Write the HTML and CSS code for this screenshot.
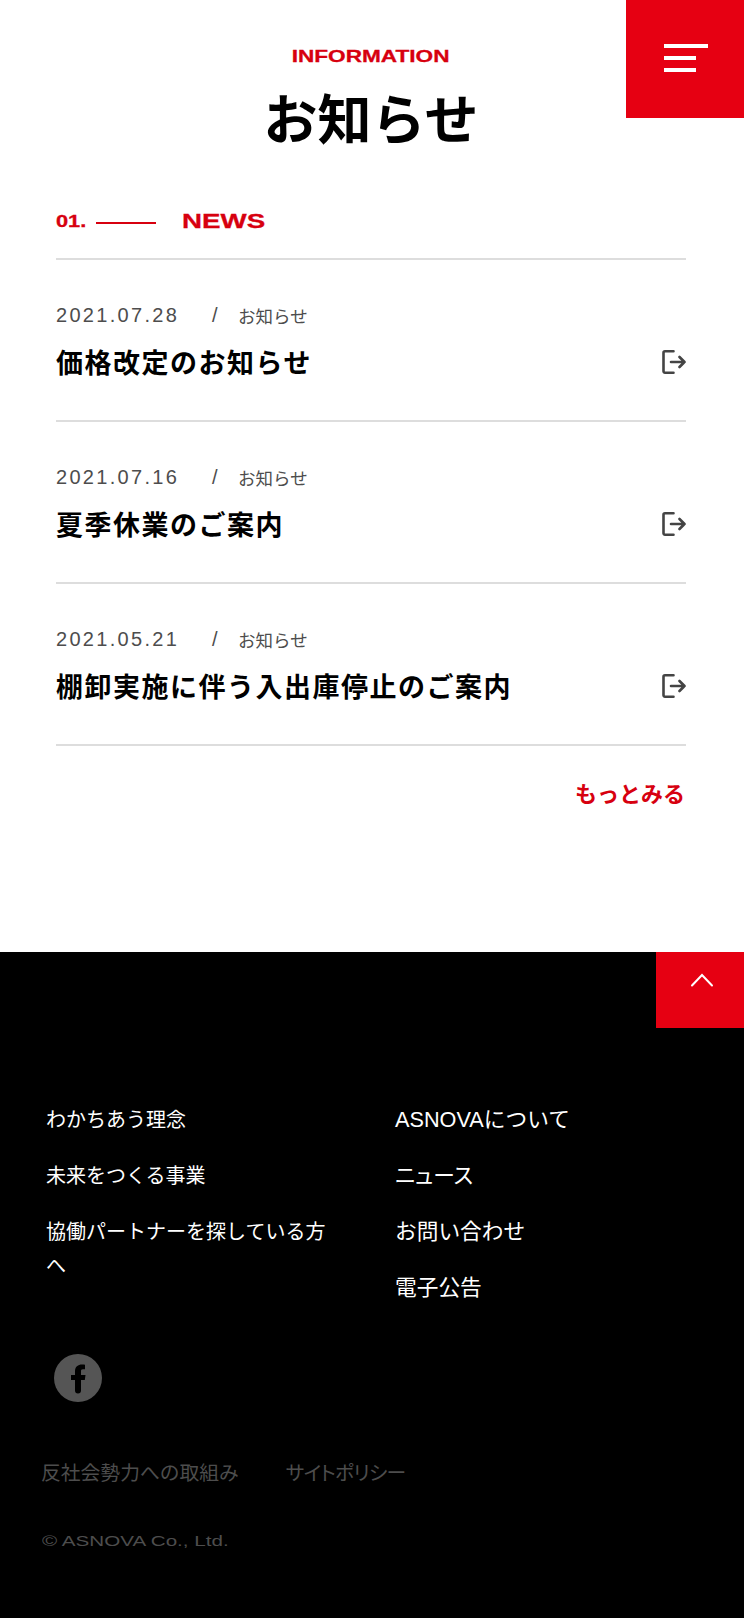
FILE: index.html
```html
<!DOCTYPE html>
<html lang="ja">
<head>
    <meta charset="UTF-8">
    <meta name="viewport" content="width=device-width, initial-scale=1.0">
    <title>お知らせ</title>
    <link rel="stylesheet" href="styles.css">
</head>
<body>

    <a href="#" class="menu-button" aria-label="メニュー">
        <span class="bar bar-long"></span>
        <span class="bar"></span>
        <span class="bar"></span>
    </a>

    <main>
        <header class="page-title">
            <p class="page-title-en">INFORMATION</p>
            <h1>お知らせ</h1>
        </header>

        <section class="news">
            <h2 class="section-title">
                <span class="section-no">01.</span>
                <span class="section-line"></span>
                <span class="section-name">NEWS</span>
            </h2>

            <ul class="news-list">
                <li>
                    <a href="#" class="news-item">
                        <div class="news-text">
                            <p class="news-meta"><span class="news-date">2021.07.28</span><span class="news-slash">/</span><span class="news-cat">お知らせ</span></p>
                            <p class="news-title">価格改定のお知らせ</p>
                        </div>
                        <svg class="news-icon" viewBox="0 0 26 26" aria-hidden="true"><path d="M13.500 2.300H5a1.500 1.500 0 0 0-1.500 1.500v18.400A1.500 1.500 0 0 0 5 23.700h8.500M11 13h13.500M19.500 8l5 5-5 5"/></svg>
                    </a>
                </li>
                <li>
                    <a href="#" class="news-item">
                        <div class="news-text">
                            <p class="news-meta"><span class="news-date">2021.07.16</span><span class="news-slash">/</span><span class="news-cat">お知らせ</span></p>
                            <p class="news-title">夏季休業のご案内</p>
                        </div>
                        <svg class="news-icon" viewBox="0 0 26 26" aria-hidden="true"><path d="M13.500 2.300H5a1.500 1.500 0 0 0-1.500 1.500v18.400A1.500 1.500 0 0 0 5 23.700h8.500M11 13h13.500M19.500 8l5 5-5 5"/></svg>
                    </a>
                </li>
                <li>
                    <a href="#" class="news-item">
                        <div class="news-text">
                            <p class="news-meta"><span class="news-date">2021.05.21</span><span class="news-slash">/</span><span class="news-cat">お知らせ</span></p>
                            <p class="news-title">棚卸実施に伴う入出庫停止のご案内</p>
                        </div>
                        <svg class="news-icon" viewBox="0 0 26 26" aria-hidden="true"><path d="M13.500 2.300H5a1.500 1.500 0 0 0-1.500 1.500v18.400A1.500 1.500 0 0 0 5 23.700h8.500M11 13h13.500M19.500 8l5 5-5 5"/></svg>
                    </a>
                </li>
            </ul>

            <p class="more"><a href="#">もっとみる</a></p>
        </section>
    </main>

    <footer class="site-footer">
        <a href="#" class="to-top" aria-label="ページトップへ">
            <svg viewBox="0 0 24 14" aria-hidden="true"><path d="M2 12.500 12 2l10 10.500"/></svg>
        </a>

        <div class="footer-nav">
            <ul>
                <li><a href="#">わかちあう理念</a></li>
                <li><a href="#">未来をつくる事業</a></li>
                <li><a href="#">協働パートナーを探している方へ</a></li>
            </ul>
            <ul class="footer-nav-right">
                <li><a href="#">ASNOVAについて</a></li>
                <li class="kana"><a href="#">ニュース</a></li>
                <li><a href="#">お問い合わせ</a></li>
                <li><a href="#">電子公告</a></li>
            </ul>
        </div>

        <a href="#" class="facebook" aria-label="Facebook">
            <svg viewBox="0 0 48 48" aria-hidden="true"><circle class="fb-circle" cx="24" cy="24" r="24"/><path class="fb-f" d="M21 26h-4v-5h4v-3.500C21 12.500 24 10.500 28 10.500c1.200 0 2.300.1 3 .3v4.500h-2c-1.800 0-2 .8-2 2.200V21h4.500l-.7 5H27v10.500a3 3 0 0 1-6 0z"/></svg>
        </a>

        <div class="footer-links">
            <a href="#">反社会勢力への取組み</a>
            <a href="#" class="kana policy">サイトポリシー</a>
        </div>

        <p class="copyright">© ASNOVA Co., Ltd.</p>
    </footer>

</body>
</html>
```

FILE: styles.css
```css
* {
    box-sizing: border-box;
}

body {
    font-family: "Liberation Sans", "Noto Sans CJK JP", sans-serif;
    background-color: #fff;
    color: #000;
    margin: 0;
    padding: 0;
}

a {
    color: inherit;
    text-decoration: none;
}

ul {
    list-style-type: none;
    margin: 0;
    padding: 0;
}

p, h1, h2 {
    margin: 0;
}

/* メニューボタン */
.menu-button {
    position: absolute;
    top: 0;
    right: 0;
    width: 118px;
    height: 118px;
    background-color: #e60012;
    display: flex;
    flex-direction: column;
    gap: 8px;
    padding: 44px 0 0 38px;
}

.bar {
    display: block;
    width: 32px;
    height: 4px;
    background-color: #fff;
}

.bar-long {
    width: 44px;
}

main {
    height: 952px;
}

.page-title {
    padding: 46px 2px 0 0;
    text-align: center;
}

/* 英字は横長の書体なので横に伸ばす */
.page-title-en {
    display: inline-block;
    vertical-align: top;
    font-size: 16.500px;
    font-weight: bold;
    line-height: 20px;
    color: #d7000f;
    -webkit-text-stroke: 0.3px #d7000f;
    transform: scaleX(1.37);
}

.page-title h1 {
    font-size: 54px;
    font-weight: bold;
    line-height: 70px;
    margin-top: 20px;
}

.news {
    padding: 0 58px 0 56px;
}

.section-title {
    display: flex;
    align-items: center;
    margin-top: 53px;
    height: 24px;
    color: #d7000f;
    font-weight: bold;
    -webkit-text-stroke: 0.3px #d7000f;
}

.section-no {
    font-size: 16.500px;
    width: 40px;
    transform: scaleX(1.32);
    transform-origin: left center;
}

.section-line {
    width: 60px;
    height: 2px;
    margin-top: 4px;
    background-color: #d7000f;
}

.section-name {
    font-size: 21px;
    margin-left: 26px;
    transform: scaleX(1.32);
    transform-origin: left center;
}

.news-list {
    margin-top: 25px;
    border-top: 2px solid #ddd;
}

.news-list li {
    border-bottom: 2px solid #ddd;
}

.news-item {
    display: flex;
    justify-content: space-between;
    align-items: flex-start;
    height: 160px;
    padding-top: 43px;
}

.news-meta {
    display: flex;
    align-items: center;
    height: 24px;
    color: #4d4d4d;
}

.news-date {
    font-size: 20px;
    letter-spacing: 2.300px;
    width: 156px;
}

.news-slash {
    font-size: 20px;
    width: 26px;
}

.news-cat {
    font-size: 17.500px;
}

.news-title {
    font-size: 27px;
    font-weight: bold;
    letter-spacing: 1.500px;
    line-height: 40px;
    margin-top: 17px;
}

.news-icon {
    width: 26px;
    height: 26px;
    margin-top: 46px;
    fill: none;
    stroke: #444;
    stroke-width: 2.600;
    stroke-linecap: round;
    stroke-linejoin: round;
}

.more {
    text-align: right;
    margin-top: 33px;
    padding-right: 1px;
    font-size: 22px;
    font-weight: bold;
    line-height: 32px;
    color: #d7000f;
}

/* フッター */
.site-footer {
    position: relative;
    height: 666px;
    background-color: #000;
    color: #fff;
}

.to-top {
    position: absolute;
    top: 0;
    right: 0;
    width: 88px;
    height: 76px;
    background-color: #e60012;
    display: flex;
    justify-content: center;
    padding: 21px 0 0 3px;
}

.to-top svg {
    width: 24px;
    height: 14px;
    fill: none;
    stroke: #fff;
    stroke-width: 2;
    stroke-linecap: round;
}

.footer-nav {
    display: grid;
    grid-template-columns: 349px 1fr;
    padding: 151px 0 0 46px;
    font-size: 20px;
    line-height: 34px;
}

.footer-nav li {
    width: 290px;
    margin-bottom: 22px;
}

.footer-nav-right {
    font-size: 21.700px;
}

/* カタカナは詰めて組む */
.kana {
    font-feature-settings: "palt";
}

.facebook {
    display: block;
    width: 48px;
    height: 48px;
    margin: 27px 0 0 54px;
}

.facebook svg {
    display: block;
    width: 48px;
    height: 48px;
}

.fb-circle {
    fill: #555;
}

.fb-f {
    fill: #000;
}

.footer-links {
    display: flex;
    gap: 47px;
    margin: 54px 0 0 41px;
    font-size: 19.800px;
    line-height: 34px;
    color: #4d4d4d;
}

.policy {
    letter-spacing: -0.700px;
}

.copyright {
    width: fit-content;
    font-size: 15.500px;
    line-height: 24px;
    margin: 39px 0 0 42px;
    color: #4d4d4d;
    transform: scaleX(1.33);
    transform-origin: left center;
}
```
